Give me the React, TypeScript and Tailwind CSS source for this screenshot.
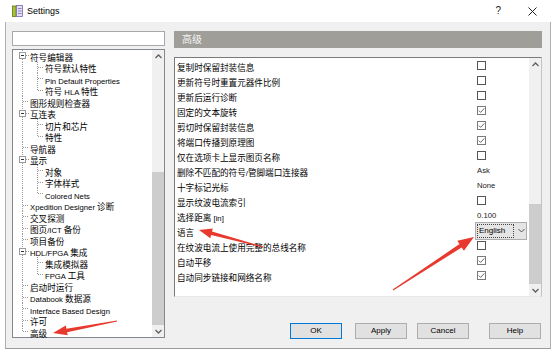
import React from "react";

const CJK = /([\u2E80-\u9FFF\uFF00-\uFFEF]+)/;

function Txt({ s, latin = "text-[7.7px]", cjk = "text-[8.6px]" }: { s: string; latin?: string; cjk?: string }) {
  const parts = s.split(CJK);
  return (
    <>
      {parts.map((p, i) =>
        p === "" ? null : (
          <span key={i} className={i % 2 === 1 ? cjk : latin}>
            {p}
          </span>
        )
      )}
    </>
  );
}

type TreeItem = { label: string; level: 0 | 1; exp?: boolean; last?: boolean };

const tree: TreeItem[] = [
  { label: "符号编辑器", level: 0, exp: true },
  { label: "符号默认特性", level: 1 },
  { label: "Pin Default Properties", level: 1 },
  { label: "符号 HLA 特性", level: 1, last: true },
  { label: "图形规则检查器", level: 0 },
  { label: "互连表", level: 0, exp: true },
  { label: "切片和芯片", level: 1 },
  { label: "特性", level: 1, last: true },
  { label: "导航器", level: 0 },
  { label: "显示", level: 0, exp: true },
  { label: "对象", level: 1 },
  { label: "字体样式", level: 1 },
  { label: "Colored Nets", level: 1, last: true },
  { label: "Xpedition Designer 诊断", level: 0 },
  { label: "交叉探测", level: 0 },
  { label: "图页/ICT 备份", level: 0 },
  { label: "项目备份", level: 0 },
  { label: "HDL/FPGA 集成", level: 0, exp: true },
  { label: "集成模拟器", level: 1 },
  { label: "FPGA 工具", level: 1, last: true },
  { label: "启动时运行", level: 0 },
  { label: "Databook 数据源", level: 0 },
  { label: "Interface Based Design", level: 0 },
  { label: "许可", level: 0 },
  { label: "高级", level: 0, last: true },
];

const DOT = { stroke: "#9a9a9a", strokeWidth: 1, strokeDasharray: "1 1" };

function TreeRow({ item }: { item: TreeItem }) {
  const { level, exp, last } = item;
  const w = level === 0 ? 17 : 32;
  const H = 11.5;
  return (
    <div className="flex h-[11.5px] items-center whitespace-nowrap">
      <svg width={w} height={H} className="shrink-0">
        {level === 0 && exp && (
          <>
            <line x1="9.5" y1="0" x2="9.5" y2="2" {...DOT} />
            <line x1="9.5" y1="9" x2="9.5" y2={H} {...DOT} />
            <rect x="6.5" y="2.5" width="6" height="6" fill="white" stroke="#9a9a9a" strokeWidth="1" />
            <line x1="8" y1="5.5" x2="11" y2="5.5" stroke="#333" strokeWidth="1" />
            <line x1="13" y1="5.5" x2="16" y2="5.5" {...DOT} />
          </>
        )}
        {level === 0 && !exp && (
          <>
            <line x1="9.5" y1="0" x2="9.5" y2={last ? 6 : H} {...DOT} />
            <line x1="10" y1="5.5" x2="16" y2="5.5" {...DOT} />
          </>
        )}
        {level === 1 && (
          <>
            <line x1="9.5" y1="0" x2="9.5" y2={H} {...DOT} />
            <line x1="24.5" y1="0" x2="24.5" y2={last ? 6 : H} {...DOT} />
            <line x1="25" y1="5.5" x2="31" y2="5.5" {...DOT} />
          </>
        )}
      </svg>
      <span className="leading-none text-black">
        <Txt s={item.label} />
      </span>
    </div>
  );
}

type Val =
  | { t: "cb"; v: boolean }
  | { t: "txt"; v: string }
  | { t: "dd"; v: string };

const rows: [string, Val][] = [
  ["复制时保留封装信息", { t: "cb", v: false }],
  ["更新符号时重置元器件比例", { t: "cb", v: false }],
  ["更新后运行诊断", { t: "cb", v: false }],
  ["固定的文本旋转", { t: "cb", v: true }],
  ["剪切时保留封装信息", { t: "cb", v: true }],
  ["将端口传播到原理图", { t: "cb", v: true }],
  ["仅在选项卡上显示图页名称", { t: "cb", v: false }],
  ["删除不匹配的符号/管脚端口连接器", { t: "txt", v: "Ask" }],
  ["十字标记光标", { t: "txt", v: "None" }],
  ["显示纹波电流索引", { t: "cb", v: false }],
  ["选择距离 [in]", { t: "txt", v: "0.100" }],
  ["语言", { t: "dd", v: "English" }],
  ["在纹波电流上使用完整的总线名称", { t: "cb", v: false }],
  ["自动平移", { t: "cb", v: true }],
  ["自动同步链接和网络名称", { t: "cb", v: true }],
];

function Checkbox({ checked }: { checked: boolean }) {
  return (
    <div
      className={`flex h-[9px] w-[9px] items-center justify-center border bg-white ${
        checked ? "border-[#7a7a7a]" : "border-[#555]"
      }`}
    >
      {checked && (
        <svg width="7" height="7" viewBox="0 0 7 7">
          <path d="M0.8 3.6 L2.6 5.4 L6.3 1.4" fill="none" stroke="#6a6a6a" strokeWidth="1" />
        </svg>
      )}
    </div>
  );
}

function ValueCell({ v }: { v: Val }) {
  if (v.t === "cb") return <Checkbox checked={v.v} />;
  if (v.t === "txt") return <span className="text-[7.7px] leading-none text-[#222]">{v.v}</span>;
  return (
    <div className="-ml-[2px] flex h-[18px] w-[52px] shrink-0 items-center border border-[#adadad] bg-[#e5e5e5]">
      <div className="ml-[1px] flex h-[14px] w-[37px] items-center border border-dotted border-[#444] pl-[1px] text-[8px] leading-none text-black">
        {v.v}
      </div>
      <svg width="7" height="5" viewBox="0 0 7 5" className="ml-[4px]">
        <path d="M0.5 1 L3.5 4 L6.5 1" fill="none" stroke="#555" strokeWidth="1" />
      </svg>
    </div>
  );
}

function Chevron({ up }: { up?: boolean }) {
  return (
    <svg width="7" height="5" viewBox="0 0 7 5">
      <path d={up ? "M0.5 4 L3.5 1 L6.5 4" : "M0.5 1 L3.5 4 L6.5 1"} fill="none" stroke="#606060" strokeWidth="1.3" />
    </svg>
  );
}

function Scrollbar({ before, thumb }: { before: number; thumb: number }) {
  return (
    <div className="flex w-[12px] shrink-0 flex-col bg-[#f0f0f0]">
      <div className="flex h-[12px] items-center justify-center">
        <Chevron up />
      </div>
      <div style={{ height: before }} />
      <div className="bg-[#cdcdcd]" style={{ height: thumb }} />
      <div className="flex-1" />
      <div className="flex h-[12px] items-center justify-center">
        <Chevron />
      </div>
    </div>
  );
}

function Btn({ label, primary, className = "" }: { label: string; primary?: boolean; className?: string }) {
  return (
    <div
      className={`flex h-[16px] w-[52px] items-center justify-center bg-[#e1e1e1] text-[8px] leading-none text-black ${
        primary ? "border border-[#0078d7]" : "border border-[#adadad]"
      } ${className}`}
    >
      {label}
    </div>
  );
}

function arrowPoints(tx: number, ty: number, px: number, py: number, L: number, H: number, w0: number, w1: number) {
  const dx = px - tx;
  const dy = py - ty;
  const len = Math.hypot(dx, dy);
  const ux = dx / len;
  const uy = dy / len;
  const nx = -uy;
  const ny = ux;
  const bx = px - ux * L;
  const by = py - uy * L;
  const pts = [
    [tx + nx * w0, ty + ny * w0],
    [bx + nx * w1, by + ny * w1],
    [bx + nx * H, by + ny * H],
    [px, py],
    [bx - nx * H, by - ny * H],
    [bx - nx * w1, by - ny * w1],
    [tx - nx * w0, ty - ny * w0],
  ];
  return pts.map((p) => `${p[0].toFixed(1)},${p[1].toFixed(1)}`).join(" ");
}

export default function App() {
  return (
    <div className="relative h-[355px] w-[554px] overflow-hidden bg-white [font-family:'Liberation_Sans','Noto_Sans_CJK_SC',sans-serif]">
      {/* title bar */}
      <div className="flex h-[22px] items-center bg-white pl-[12px]">
        <svg width="11" height="12" viewBox="0 0 11 12" className="shrink-0">
          <rect x="0.5" y="1" width="3.5" height="10.5" fill="#a8c23a" stroke="#5d7a14" strokeWidth="0.8" />
          <rect x="4.5" y="0.5" width="6" height="11" fill="#e4e0f4" stroke="#7468b0" strokeWidth="0.8" />
          <line x1="6" y1="3.5" x2="9.5" y2="3.5" stroke="#7468b0" strokeWidth="0.8" />
          <line x1="6" y1="6" x2="9.5" y2="6" stroke="#7468b0" strokeWidth="0.8" />
          <line x1="6" y1="8.5" x2="9.5" y2="8.5" stroke="#7468b0" strokeWidth="0.8" />
        </svg>
        <span className="ml-[4px] text-[9px] leading-none text-black">Settings</span>
        <div className="flex-1" />
        <span className="text-[10px] leading-none text-[#222]">?</span>
        <svg width="9" height="9" viewBox="0 0 9 9" className="ml-[27px] mr-[17px]">
          <path d="M0.5 0.5 L8.5 8.5 M8.5 0.5 L0.5 8.5" stroke="#222" strokeWidth="1" />
        </svg>
      </div>

      {/* window body */}
      <div className="ml-[5px] flex h-[327px] w-[546px] border-x border-b border-x-[#b0b0b0] border-b-[#9a9a9a] bg-[#f0f0f0] pl-[6px] pt-[9px]">
        {/* left column */}
        <div className="flex w-[153px] shrink-0 flex-col">
          <div className="h-[15px] w-[153px] border border-[#a8a8a8] bg-white" />
          <div className="mt-[3px] flex h-[289px] w-[153px] border border-[#828790] bg-white">
            <div className="w-[139px]">
              {tree.map((it, i) => (
                <TreeRow key={i} item={it} />
              ))}
            </div>
            <Scrollbar before={110} thumb={153} />
          </div>
        </div>

        {/* right column */}
        <div className="ml-[9px] flex w-[368px] shrink-0 flex-col">
          <div className="flex h-[17px] items-center bg-[#a09e99] pl-[8px]">
            <span className="text-[10px] leading-none text-[#f4f4f4]">高级</span>
          </div>
          <div className="mt-[9px] flex h-[240px] border border-b-[#e8e8e8] border-l-[#7a7a7a] border-r-[#c4c4c4] border-t-[#7a7a7a] bg-white">
            <div className="w-[354px]">
              {rows.map(([label, v], i) => (
                <div key={i} className="flex h-[15px] items-center">
                  <div className="w-[302px] whitespace-nowrap pl-[2px] leading-none text-black">
                    <Txt s={label} />
                  </div>
                  <div className="flex flex-1 items-center">
                    <ValueCell v={v} />
                  </div>
                </div>
              ))}
            </div>
            <Scrollbar before={134} thumb={80} />
          </div>
          <div className="mt-[26px] flex justify-end pr-[1px]">
            <Btn label="OK" primary />
            <Btn label="Apply" className="ml-[13px]" />
            <Btn label="Cancel" className="ml-[10px]" />
            <Btn label="Help" className="ml-[20px]" />
          </div>
        </div>
      </div>

      {/* annotation arrows */}
      <svg className="pointer-events-none absolute left-0 top-0" width="554" height="355">
        <polygon points={arrowPoints(117, 321, 53, 333, 14, 5, 0.5, 1.8)} fill="#e8392e" />
        <polygon points={arrowPoints(263, 247, 199, 230, 13, 5, 0.5, 1.8)} fill="#e8392e" />
        <polygon points={arrowPoints(393, 290, 474, 237, 16, 6, 0.6, 2)} fill="#e8392e" />
      </svg>
    </div>
  );
}
